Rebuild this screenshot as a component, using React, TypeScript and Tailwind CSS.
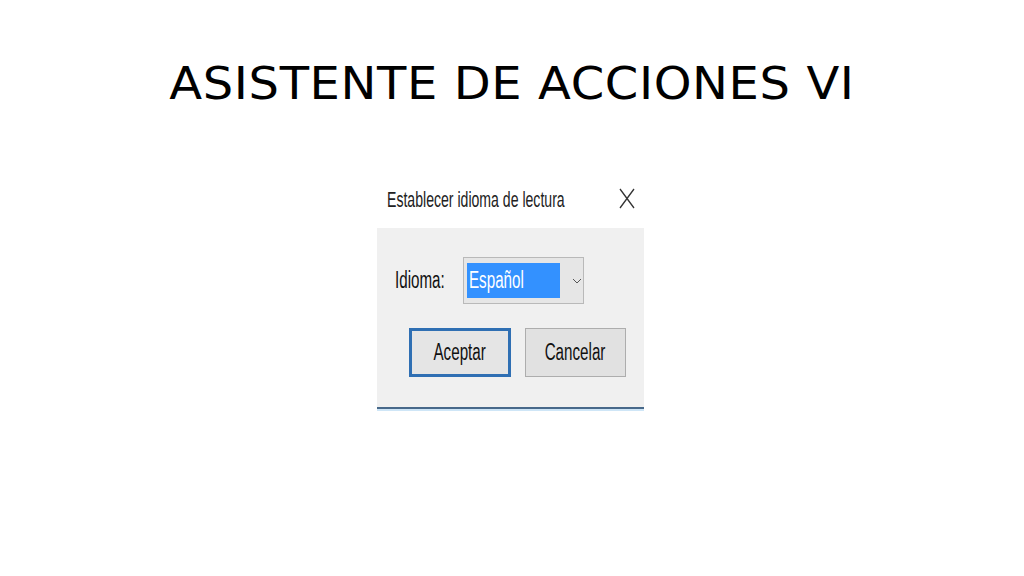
export default function App() {
  return (
    <div className="w-[1024px] h-[576px] bg-white flex flex-col items-center overflow-hidden">
      <h1 className="mt-[61px] origin-top scale-y-[0.92] text-[48px] leading-[1] text-black tracking-[0.6px]" style={{ fontFamily: '"DejaVu Sans", Verdana, sans-serif' }}>
        ASISTENTE DE ACCIONES VI
      </h1>

      <div className="mt-[68px] ml-[-3px] w-[267px] flex flex-col" style={{ fontFamily: '"Liberation Sans", Arial, sans-serif' }}>
        <div className="h-[51px] bg-white flex items-start pt-[6px] pl-[10px] pr-[9px] justify-between">
          <div className="w-[190px] shrink-0 overflow-visible">
            <span className="inline-block origin-left scale-x-[0.64] text-[22px] text-[#222] whitespace-nowrap">
              Establecer idioma de lectura
            </span>
          </div>
          <svg width="16" height="21" viewBox="0 0 16 21" className="shrink-0 mt-[5px]">
            <path d="M1 1 L15 20 M15 1 L1 20" stroke="#333" strokeWidth="1.3" fill="none" />
          </svg>
        </div>

        <div className="h-[179px] bg-[#f0f0f0] flex flex-col">
          <div className="flex items-center mt-[29px] pl-[18px]">
            <div className="w-[68px] shrink-0">
              <span className="inline-block origin-left scale-x-[0.66] text-[23px] text-[#111]">Idioma:</span>
            </div>
            <div className="w-[121px] h-[47px] border border-[#b9b9b9] bg-[#e6e6e6] flex items-center pl-[3px]">
              <div className="w-[93px] h-[35px] bg-[#3391ff] flex items-center pl-[2px] overflow-hidden">
                <span className="inline-block origin-left scale-x-[0.66] text-[23px] text-white whitespace-nowrap">Español</span>
              </div>
              <svg width="10" height="6" viewBox="0 0 10 6" className="ml-[12px] shrink-0">
                <path d="M1 1 L5 5 L9 1" stroke="#555" strokeWidth="1" fill="none" />
              </svg>
            </div>
          </div>

          <div className="flex mt-[24px] pl-[32px] gap-[14px]">
            <div className="w-[102px] h-[49px] border-[3px] border-[#2f6fb3] bg-[#e5e5e5] flex items-center justify-center">
              <span className="inline-block scale-x-[0.66] text-[23px] text-[#111]">Aceptar</span>
            </div>
            <div className="w-[101px] h-[49px] border border-[#adadad] bg-[#e1e1e1] flex items-center justify-center">
              <span className="inline-block scale-x-[0.66] text-[23px] text-[#111]">Cancelar</span>
            </div>
          </div>
        </div>
        <div className="h-[2px] bg-[#48698a]" />
        <div className="h-[2px] bg-[#cfe6f7]" />
      </div>
    </div>
  );
}
